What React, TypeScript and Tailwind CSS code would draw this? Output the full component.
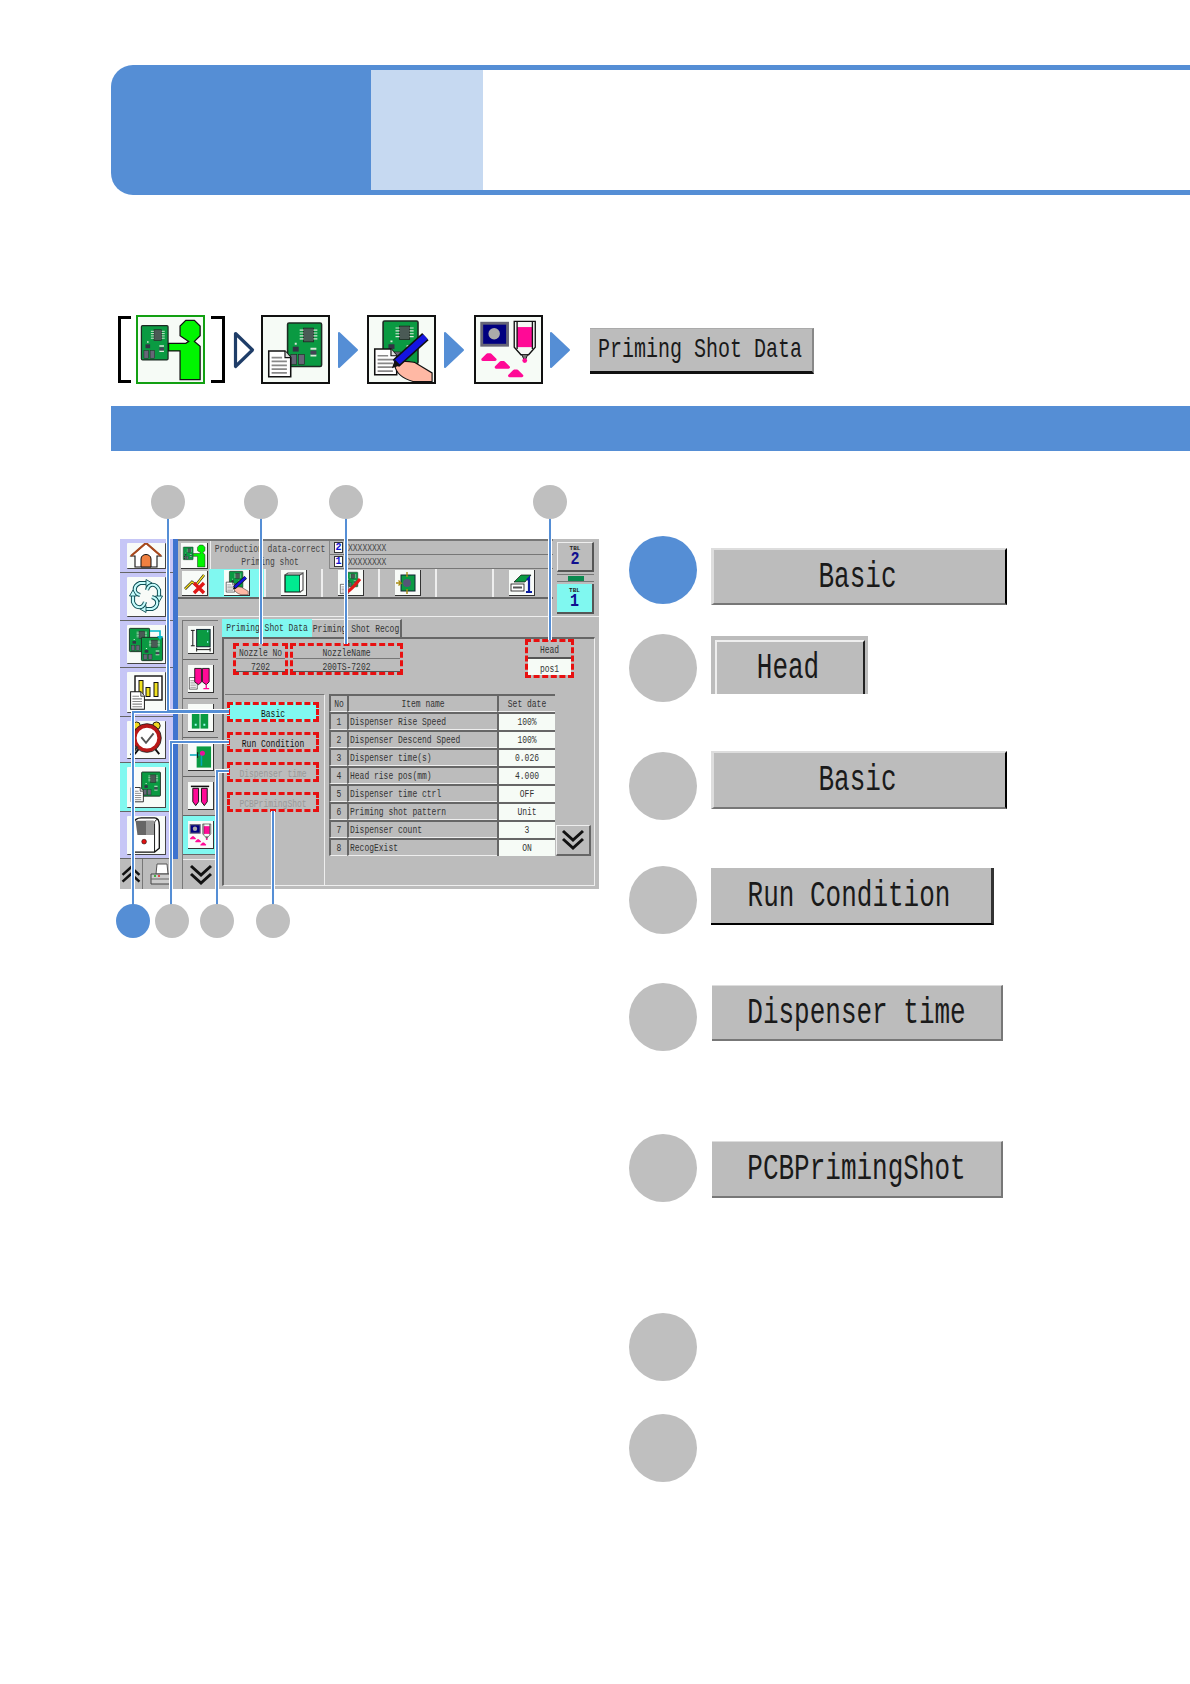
import React from "react";

const T = ({ children }: { children: React.ReactNode }) => (
  <span className="inline-block origin-center scale-y-[1.4] whitespace-pre">{children}</span>
);

const Pcb = ({ x, y, w, h }: { x: number; y: number; w: number; h: number }) => {
  const sx = w / 36;
  const sy = h / 46;
  return (
    <g transform={`translate(${x} ${y}) scale(${sx} ${sy})`}>
      <rect x="0.7" y="0.7" width="34.6" height="44.6" rx="1.5" fill="#0a9a42" stroke="#1c2a22" strokeWidth="1.6" />
      <rect x="17" y="6" width="10" height="14" fill="#4a5a55" stroke="#222" strokeWidth="0.8" />
      <path d="M13 8h4M13 11h4M13 14h4M13 17h4M27 8h4M27 11h4M27 14h4M27 17h4" stroke="#d8e8d8" strokeWidth="1.2" />
      <rect x="6" y="25" width="6" height="5" fill="#334" />
      <path d="M8 22h2M24 27h6M24 34h6" stroke="#d8e8d8" strokeWidth="2" />
      <rect x="24" y="29" width="6" height="4" fill="#445" />
      <rect x="4" y="33" width="6" height="10" fill="#667" stroke="#222" strokeWidth="0.6" />
      <rect x="12" y="33" width="6" height="10" fill="#667" stroke="#222" strokeWidth="0.6" />
    </g>
  );
};

const Doc = ({ x, y, w = 25, h = 29 }: { x: number; y: number; w?: number; h?: number }) => (
  <g transform={`translate(${x} ${y}) scale(${w / 25} ${h / 29})`}>
    <path d="M1 1H18L24 8V28H1Z" fill="#fff" stroke="#111" strokeWidth="1.6" />
    <path d="M18 1V8H24" fill="#ddd" stroke="#111" strokeWidth="1.2" />
    <path d="M4 8H15M4 12H20M4 16H20M4 20H20M4 24H20" stroke="#888" strokeWidth="1.8" />
  </g>
);

const PersonIcon = ({ s = 68 }: { s?: number }) => (
  <svg width={s} height={s} viewBox="0 0 68 68">
    <Pcb x={3} y={8} w={29} h={37} />
    <path
      d="M50 3L59 3L65 9L65 19L59 25L65 30L65 65L44 65L44 35L32 35L32 27L50 27L53 25L44 19L44 9Z"
      fill="#00f500"
      stroke="#111"
      strokeWidth="1.3"
    />
  </svg>
);

const BoardDocIcon = ({ s = 68 }: { s?: number }) => (
  <svg width={s} height={s} viewBox="0 0 68 68">
    <Pcb x={25} y={5} w={37} h={47} />
    <Doc x={5} y={34} />
  </svg>
);

const BoardEditIcon = ({ s = 68 }: { s?: number }) => (
  <svg width={s} height={s} viewBox="0 0 68 68">
    <Pcb x={14} y={3} w={38} h={46} />
    <Doc x={5} y={32} />
    <path d="M27 50C34 44 42 46 48 47L66 58V67H46C36 64 28 58 27 50Z" fill="#ffb8a4" stroke="#111" strokeWidth="1.2" />
    <path d="M28 48L59 20" stroke="#111" strokeWidth="10" />
    <path d="M28 48L59 20" stroke="#1414e0" strokeWidth="7" />
    <path d="M24 53L27 44L33 50Z" fill="#111" />
  </svg>
);

const ShotIcon = ({ s = 68 }: { s?: number }) => (
  <svg width={s} height={s} viewBox="0 0 68 68">
    <rect x="6" y="6" width="27" height="23" fill="#000080" stroke="#667" strokeWidth="3" />
    <circle cx="19" cy="17" r="6" fill="#aaa" />
    <path d="M40 4H62V31L55 39H47L40 31Z" fill="#f4f8f4" stroke="#111" strokeWidth="1.4" />
    <rect x="43" y="10" width="16" height="21" fill="#ff0a96" />
    <path d="M43 4V33M59 4V33" stroke="#111" strokeWidth="1.4" />
    <path d="M48 39L51 46L54 39" fill="#777" stroke="#111" />
    <circle cx="51" cy="45" r="2.5" fill="#ff0a96" />
    <path d="M7 44L12 39H15L20 44Z M21 52L26 47H29L34 52Z M35 61L40 56H43L48 61Z" fill="#ff0a96" stroke="#ff0a96" strokeWidth="3" strokeLinejoin="round" />
  </svg>
);

const HomeIcon = () => (
  <svg width="36" height="28" viewBox="0 0 36 28">
    <path d="M18 2L33 15H29V26H7V15H3Z" fill="#fff" stroke="#111" strokeWidth="1.1" />
    <path d="M3 15L18 2L33 15" fill="none" stroke="#a8481c" strokeWidth="2.2" />
    <path d="M13 26V18C13 12 23 12 23 18V26Z" fill="#f08040" stroke="#111" />
  </svg>
);

const RecycleIcon = () => (
  <svg width="36" height="36" viewBox="0 0 36 36" fill="none">
    {[0, 90, 180, 270].map((r) => (
      <g key={r} transform={`rotate(${r} 18 18)`}>
        <path d="M12 17C5 15 5 8 12 5H19" stroke="#0f4f55" strokeWidth="4.2" />
        <path d="M12 17C5 15 5 8 12 5H19" stroke="#c4fbfb" strokeWidth="2.2" />
        <path d="M18 1.5L24 5L18 8.5Z" fill="#c4fbfb" stroke="#0f4f55" strokeWidth="0.9" />
      </g>
    ))}
  </svg>
);

const BoardCopyIcon = () => (
  <svg width="38" height="38" viewBox="0 0 38 38">
    <Pcb x={2} y={3} w={21} h={24} />
    <Pcb x={14} y={12} w={22} h={24} />
    <path d="M23 6H33V12" fill="none" stroke="#00b8c8" strokeWidth="1.6" />
    <path d="M30 11H36L33 15Z" fill="#00b8c8" />
  </svg>
);

const ChartIcon = () => (
  <svg width="36" height="38" viewBox="0 0 36 38">
    <rect x="7" y="3" width="27" height="24" fill="#fff" stroke="#111" strokeWidth="1.4" />
    <path d="M13 7V24M20 14V24M28 9V24" stroke="#111" strokeWidth="5" />
    <path d="M13 8V23M20 15V23M28 10V23" stroke="#f0e020" strokeWidth="3" />
    <Doc x={2} y={18} w={15} h={19} />
  </svg>
);

const AlarmIcon = () => (
  <svg width="36" height="38" viewBox="0 0 38 40">
    <circle cx="9" cy="6" r="4" fill="#f0d820" stroke="#111" />
    <circle cx="30" cy="6" r="4" fill="#f0d820" stroke="#111" />
    <circle cx="20" cy="19" r="13" fill="#fff" stroke="#b81818" strokeWidth="4" />
    <circle cx="20" cy="19" r="15.2" fill="none" stroke="#111" strokeWidth="0.8" />
    <path d="M14 18L19 24L27 14" fill="none" stroke="#555" strokeWidth="2" />
    <path d="M11 31L7 36M29 31L33 36" stroke="#111" strokeWidth="2" />
    <path d="M3 37L10 28" stroke="#333" strokeWidth="2.5" />
  </svg>
);

const MachineIcon = () => (
  <svg width="34" height="38" viewBox="0 0 34 40">
    <path d="M4 38V8C4 4 8 2 12 2H26C30 2 31 6 31 10V34L26 38Z" fill="#fff" stroke="#111" strokeWidth="1.4" />
    <path d="M26 38V8C26 5 28 3 30 4" fill="none" stroke="#111" />
    <path d="M6 5H25V20H8Z" fill="#666" />
    <path d="M17 5H25V20H17Z" fill="#999" />
    <circle cx="15" cy="27" r="2.5" fill="#e01010" stroke="#111" strokeWidth="0.6" />
  </svg>
);

const SizeIcon = () => (
  <svg width="26" height="26" viewBox="0 0 26 26">
    <rect x="9" y="2" width="14" height="18" fill="#0a9a42" stroke="#123" />
    <path d="M20 4h1M20 15h1" stroke="#9ff" strokeWidth="2" />
    <path d="M5 3V19M3 3H7M3 19H7M9 23H23M9 21V25M23 21V25" stroke="#111" strokeWidth="1" />
  </svg>
);

const SyringeIcon = () => (
  <svg width="26" height="26" viewBox="0 0 26 26">
    <Doc x={1} y={11} w={9} h={13} />
    <path d="M7 2H14V16L11 19L7 16ZM15 2H22V16L19 19L15 16Z" fill="#ff0a96" stroke="#111" strokeWidth="0.9" />
    <path d="M19 19V23M16 23H22" stroke="#ff0a96" strokeWidth="1.4" />
  </svg>
);

const BookIcon = () => (
  <svg width="26" height="26" viewBox="0 0 26 26">
    <rect x="4" y="8" width="8" height="16" fill="#0a9a42" />
    <rect x="13" y="8" width="8" height="16" fill="#0a9a42" />
    <path d="M7 20h2M16 20h2" stroke="#9fe" strokeWidth="2" />
  </svg>
);

const PinIcon = () => (
  <svg width="26" height="26" viewBox="0 0 26 26">
    <rect x="9" y="2" width="15" height="22" fill="#0a9a42" />
    <path d="M2 11H12M14 11V22" stroke="#00a8b8" strokeWidth="1.6" />
    <path d="M10 8V14" stroke="#111" />
    <circle cx="15" cy="9" r="2.6" fill="#e8109a" />
  </svg>
);

const DoubleSyringeIcon = () => (
  <svg width="26" height="26" viewBox="0 0 26 26">
    <path d="M5 5H11V19L8 23L5 19ZM14 5H20V19L17 23L14 19Z" fill="#ff0a96" stroke="#111" />
    <path d="M3 3H22" stroke="#111" strokeWidth="1.6" />
  </svg>
);

const GreenBoxIcon = () => (
  <svg width="24" height="24" viewBox="0 0 24 24">
    <path d="M4 4H19V21H4Z" fill="#00ea90" stroke="#111" strokeWidth="1.2" />
    <path d="M19 4L22 2V19L19 21" fill="#fff" stroke="#555" strokeWidth="1.2" />
    <path d="M4 4L7 2H22" fill="none" stroke="#555" strokeWidth="1.2" />
  </svg>
);

const NoGoIcon = () => (
  <svg width="24" height="24" viewBox="0 0 24 24">
    <path d="M2 18L9 11L13 14L21 4" fill="none" stroke="#111" strokeWidth="2.6" />
    <path d="M2 18L9 11L13 14L21 4" fill="none" stroke="#f4e020" strokeWidth="1.4" />
    <path d="M11 12L21 22M21 12L11 22" stroke="#e01818" strokeWidth="3.4" />
  </svg>
);

const CheckBoardIcon = () => (
  <svg width="24" height="24" viewBox="0 0 24 24">
    <Pcb x={7} y={1} w={13} h={15} />
    <Doc x={2} y={13} w={9} h={10} />
    <path d="M9 21C13 19 18 13 22 8" fill="none" stroke="#e01818" strokeWidth="3" />
  </svg>
);

const TargetBoardIcon = () => (
  <svg width="24" height="24" viewBox="0 0 24 24">
    <rect x="6" y="4" width="14" height="16" fill="#0a9a42" stroke="#123" />
    <circle cx="12" cy="12" r="4" fill="#557" />
    <path d="M1 12H6L3.5 9.5M3.5 14.5L6 12M12 1V6M12 18V23" fill="none" stroke="#a88a10" strokeWidth="1.4" />
  </svg>
);

const TableOneIcon = () => (
  <svg width="24" height="24" viewBox="0 0 24 24">
    <path d="M5 11L12 4H22L16 11Z" fill="#0a9a42" stroke="#111" strokeWidth="0.7" />
    <rect x="2" y="13" width="13" height="7" fill="#fff" stroke="#111" strokeWidth="0.8" />
    <path d="M4 16.5H13" stroke="#555" strokeWidth="2" />
    <path d="M18 9L20 7V21M17 21H23" fill="none" stroke="#0c1ea0" strokeWidth="2.2" />
  </svg>
);

const Chevrons = ({ s = 26, up = false }: { s?: number; up?: boolean }) => (
  <svg width={s} height={s} viewBox="0 0 26 26" fill="none" stroke="#111" strokeWidth="3">
    <g transform={up ? "rotate(180 13 13)" : undefined}>
      <path d="M3 4L13 13L23 4" />
      <path d="M3 12L13 21L23 12" />
    </g>
  </svg>
);

const PrinterIcon = () => (
  <svg width="24" height="24" viewBox="0 0 24 24">
    <path d="M8 2H18L19 12H7Z" fill="#fff" stroke="#555" />
    <path d="M2 12H22V22H2Z" fill="#ccc" stroke="#444" />
    <path d="M2 17H22" stroke="#666" />
    <path d="M5 14h2" stroke="#1a1" strokeWidth="1.4" />
    <path d="M9 14h2" stroke="#d22" strokeWidth="1.4" />
  </svg>
);

const Tri = ({ outline = false }: { outline?: boolean }) => (
  <svg width="22" height="38" viewBox="0 0 22 38" className="shrink-0">
    {outline ? (
      <path d="M2.5 2.5L19.5 19L2.5 35.5Z" fill="#fff" stroke="#1f3d68" strokeWidth="3.2" strokeLinejoin="round" />
    ) : (
      <path d="M2 2L20 19L2 36Z" fill="#558ed5" stroke="#558ed5" strokeWidth="2" strokeLinejoin="round" />
    )}
  </svg>
);

const Bracket = ({ right = false }: { right?: boolean }) => (
  <div
    className={
      right
        ? "h-[67px] w-[14px] shrink-0 border-y-[3px] border-r-[3px] border-black"
        : "h-[67px] w-[13px] shrink-0 border-y-[3px] border-l-[3px] border-black"
    }
  />
);

const IconFrame = ({ children, green = false }: { children: React.ReactNode; green?: boolean }) => (
  <div
    className={
      green
        ? "flex h-[69px] w-[69px] shrink-0 items-center justify-center border-2 border-[#12a012] bg-[#f6fbf6]"
        : "flex h-[69px] w-[69px] shrink-0 items-center justify-center border-2 border-[#111] bg-[#f6fbf6]"
    }
  >
    {children}
  </div>
);

const SideCell = ({ h, active, children }: { h: string; active?: boolean; children: React.ReactNode }) => (
  <div
    className={`flex w-full items-center justify-center border-b border-[#666] ${h} ${active ? "bg-[#80f8f0]" : ""}`}
  >
    <div className="flex h-[calc(100%-7px)] w-[39px] items-center justify-center overflow-hidden rounded-[1px] border-r border-b border-[#444] bg-[#f8fbf8]">
      {children}
    </div>
  </div>
);

const ToolCell = ({ active, children }: { active?: boolean; children: React.ReactNode }) => (
  <div
    className={`flex h-[39px] w-full items-center justify-center border-b border-[#666] ${active ? "bg-[#80f8f0]" : ""}`}
  >
    <div className="flex h-[28px] w-[26px] items-center justify-center border-r border-b border-[#333] bg-[#f8fbf8]">
      {children}
    </div>
  </div>
);

const BarCell = ({ active, children }: { active?: boolean; children?: React.ReactNode }) => (
  <div
    className={`flex h-full w-[57px] items-center justify-center border-r-2 border-[#eee] ${active ? "bg-[#80f8f0]" : ""}`}
  >
    {children ? (
      <div className="flex h-[26px] w-[26px] items-center justify-center border-r border-b border-[#333] bg-[#f8fbf8]">
        {children}
      </div>
    ) : null}
  </div>
);

const rows: [string, string][] = [
  ["Dispenser Rise Speed", "100%"],
  ["Dispenser Descend Speed", "100%"],
  ["Dispenser time(s)", "0.026"],
  ["Head rise pos(mm)", "4.000"],
  ["Dispenser time ctrl", "OFF"],
  ["Priming shot pattern", "Unit"],
  ["Dispenser count", "3"],
  ["RecogExist", "ON"],
];

const headCell = "flex h-[18px] items-center justify-center border-t-2 border-l-2 border-[#666] border-b border-b-[#eee]";
const leftCell = "flex h-[18px] items-center border-t-2 border-l-2 border-[#666] border-b border-b-[#eee] pl-px";
const valueCell = "flex h-[18px] items-center justify-center border-t-2 border-l-2 border-[#666] bg-[#f6fbf6]";
const sideBtn = "flex h-[20px] w-[92px] items-center justify-center border-[3px] border-dashed border-[#e81010] pt-[3px]";

const Lcd = () => (
  <div className="flex h-[350px] w-[479px] bg-[#bcbcbc] text-[8px] leading-none text-[#222]">
    <div className="flex w-[58px] shrink-0 flex-col">
      <div className="flex h-[320px]">
        <div className="flex w-[53px] flex-col bg-[#c6c6f6]">
          <SideCell h="h-[34px]"><HomeIcon /></SideCell>
          <SideCell h="h-[48px]"><RecycleIcon /></SideCell>
          <SideCell h="h-[47px]"><BoardCopyIcon /></SideCell>
          <SideCell h="h-[49px]"><ChartIcon /></SideCell>
          <SideCell h="h-[46px]"><AlarmIcon /></SideCell>
          <SideCell h="h-[49px]" active><BoardDocIcon s={36} /></SideCell>
          <SideCell h="h-[47px]"><MachineIcon /></SideCell>
        </div>
        <div className="w-[5px] bg-[#3f74cf]" />
      </div>
      <div className="flex h-[30px] items-center">
        <div className="flex h-full w-[23px] items-center justify-center border-r border-[#777]">
          <Chevrons s={22} up />
        </div>
        <div className="flex flex-1 items-center justify-center">
          <PrinterIcon />
        </div>
      </div>
    </div>

    <div className="flex flex-1 flex-col">
      <div className="flex h-[78px] border-b border-[#eee]">
        <div className="flex w-[375px] flex-col">
          <div className="flex h-[30px] border-t-2 border-[#777]">
            <div className="ml-[3px] mt-[2px] flex h-[26px] w-[27px] items-center justify-center border-r border-b border-[#333] bg-[#f8fbf8]">
              <PersonIcon s={24} />
            </div>
            <div className="ml-[2px] flex h-[28px] w-[119px] flex-col items-center justify-center gap-[5px] border-l border-[#eee] text-[#444]">
              <T>Production data-correct</T>
              <T>Priming shot</T>
            </div>
            <div className="flex flex-1 flex-col border-l border-[#888]">
              {["2", "1"].map((n) => (
                <div key={n} className="flex h-[14px] items-center border-b border-[#777]">
                  <span className="ml-[4px] flex h-[11px] w-[9px] items-center justify-center border border-[#333] bg-white text-[10px] font-bold text-[#1010d0]">
                    {n}
                  </span>
                  <span className="ml-[5px] text-[#444]"><T>XXXXXXXX</T></span>
                </div>
              ))}
            </div>
          </div>
          <div className="flex h-[30px] items-center border-b-2 border-[#666]">
            <div className="ml-[4px] mr-[1px] flex h-[25px] w-[26px] items-center justify-center border-r border-b border-[#333] bg-[#f8fbf8]">
              <NoGoIcon />
            </div>
            <BarCell active><BoardEditIcon s={25} /></BarCell>
            <BarCell><GreenBoxIcon /></BarCell>
            <BarCell><CheckBoardIcon /></BarCell>
            <BarCell><TargetBoardIcon /></BarCell>
            <BarCell />
            <BarCell><TableOneIcon /></BarCell>
          </div>
        </div>
        <div className="ml-[4px] flex w-[37px] flex-col">
          <div className="mt-[3px] flex h-[30px] flex-col items-center justify-center border-t border-l border-[#eee] border-r-2 border-b-2 border-r-[#555] border-b-[#555]">
            <span className="text-[6px] font-bold">TBL</span>
            <span className="scale-y-[1.2] text-[15px] font-bold text-[#101090]">2</span>
          </div>
          <div className="my-[2px] flex h-[8px] items-center justify-center border-y border-[#777]">
            <span className="h-[5px] w-[16px] bg-[#0a8a50]" />
          </div>
          <div className="flex h-[30px] flex-col items-center justify-center border-r-2 border-b-2 border-[#555] bg-[#80f8f0]">
            <span className="text-[6px] font-bold">TBL</span>
            <span className="scale-y-[1.2] text-[15px] font-bold text-[#101090]">1</span>
          </div>
        </div>
      </div>

      <div className="flex flex-1">
        <div className="ml-[4px] mt-[3px] flex w-[36px] shrink-0 flex-col border-t border-l border-[#777]">
          <ToolCell><SizeIcon /></ToolCell>
          <ToolCell><SyringeIcon /></ToolCell>
          <ToolCell><BookIcon /></ToolCell>
          <ToolCell><PinIcon /></ToolCell>
          <ToolCell><DoubleSyringeIcon /></ToolCell>
          <ToolCell active><ShotIcon s={26} /></ToolCell>
          <div className="mt-[4px] flex flex-1 items-center justify-center border-t border-[#eee]">
            <Chevrons s={26} />
          </div>
        </div>
        <div className="ml-[4px] mt-[2px] flex flex-1 flex-col">
          <div className="flex h-[18px] text-[#333]">
            <div className="flex w-[90px] items-center justify-center bg-[#80f8f0]"><T>Priming Shot Data</T></div>
            <div className="flex w-[90px] items-center justify-center border-r-2 border-t border-[#666] border-t-[#eee]">
              <T>Priming Shot Recog</T>
            </div>
          </div>
          <div className="mr-[4px] mb-[3px] flex flex-1 flex-col border-t-2 border-l-2 border-r border-b border-[#666] border-r-[#eee] border-b-[#eee]">
            <div className="flex h-[55px] items-start">
              <div className="ml-[9px] mt-[4px] flex">
                <div className="h-[32px] w-[55px] border-[3px] border-dashed border-[#e81010] text-center text-[#333]">
                  <div className="flex h-[13px] items-center justify-center border-b border-[#777] pt-px"><T>Nozzle No</T></div>
                  <div className="flex h-[13px] items-center justify-center border-b border-[#555] pt-[4px]"><T>7202</T></div>
                </div>
                <div className="ml-[2px] h-[32px] w-[113px] border-[3px] border-dashed border-[#e81010] text-center text-[#333]">
                  <div className="flex h-[13px] items-center justify-center border-b border-[#777] pt-px"><T>NozzleName</T></div>
                  <div className="flex h-[13px] items-center justify-center border-b border-[#555] pt-[4px]"><T>200TS-7202</T></div>
                </div>
              </div>
              <div className="ml-[122px] h-[39px] w-[49px] border-[3px] border-dashed border-[#e81010] text-[#333]">
                <div className="flex h-[17px] items-center justify-center border-b-2 border-[#555] pt-px"><T>Head</T></div>
                <div className="flex h-[16px] items-center justify-center bg-[#f6fbf6] pt-[3px]"><T>pos1</T></div>
              </div>
            </div>
            <div className="flex flex-1 pl-px">
              <div className="flex w-[100px] flex-col gap-[10px] border-t border-r border-[#eee] border-t-[#777] pl-[2px] pt-[7px]">
                <div className={`${sideBtn} bg-[#80f8f0] text-[#111]`}><T>Basic</T></div>
                <div className={`${sideBtn} text-[#111]`}><T>Run Condition</T></div>
                <div className={`${sideBtn} text-[#999]`}><T>Dispenser time</T></div>
                <div className={`${sideBtn} text-[#999]`}><T>PCBPrimingShot</T></div>
              </div>
              <div className="ml-[4px] flex items-start">
                <div className="grid w-[226px] grid-cols-[18px_150px_58px] text-[#333]">
                  <div className={headCell}><T>No</T></div>
                  <div className={headCell}><T>Item name</T></div>
                  <div className={headCell}><T>Set date</T></div>
                  {rows.map(([name, value], i) => (
                    <React.Fragment key={name}>
                      <div className={headCell}><T>{i + 1}</T></div>
                      <div className={leftCell}><T>{name}</T></div>
                      <div className={valueCell}><T>{value}</T></div>
                    </React.Fragment>
                  ))}
                </div>
                <div className="ml-px mt-[131px] flex h-[31px] w-[35px] items-center justify-center border-t border-l border-[#eee] border-r-2 border-b-2 border-r-[#666] border-b-[#666]">
                  <Chevrons s={26} />
                </div>
              </div>
            </div>
          </div>
        </div>
      </div>
    </div>
  </div>
);

const Leaders = () => {
  const paths = [
    "M168 502V711H229",
    "M261 502V644",
    "M346 502V644",
    "M550 502V640",
    "M133 921V712H229",
    "M171 921V742H229",
    "M217 921V771H229",
    "M273 921V811",
  ];
  const top = [168, 261, 346, 550];
  const bottom = [172, 217, 273];
  return (
    <svg className="pointer-events-none absolute left-0 top-0" width="1190" height="1684" fill="none">
      {paths.map((d) => (
        <path key={`w${d}`} d={d} stroke="#fff" strokeWidth="4" />
      ))}
      {paths.map((d) => (
        <path key={d} d={d} stroke="#558ed5" strokeWidth="2" />
      ))}
      {top.map((x) => (
        <circle key={x} cx={x} cy="502" r="17" fill="#bfbfbf" />
      ))}
      <circle cx="133" cy="921" r="17" fill="#558ed5" />
      {bottom.map((x) => (
        <circle key={x} cx={x} cy="921" r="17" fill="#bfbfbf" />
      ))}
    </svg>
  );
};

const Circle = ({ blue = false }: { blue?: boolean }) => (
  <div className={`h-[68px] w-[68px] shrink-0 rounded-full ${blue ? "bg-[#558ed5]" : "bg-[#bfbfbf]"}`} />
);

const btnBase = "flex items-center justify-center bg-[#bcbcbc] text-[26px] leading-none text-[#1a1a1a]";

export default function App() {
  return (
    <div
      className="relative h-[1684px] w-[1190px] overflow-hidden bg-white"
      style={{ fontFamily: '"Liberation Mono", monospace' }}
    >
      <div className="ml-[111px] box-content flex h-[130px] pt-[65px]">
        <div className="w-[260px] rounded-l-[22px] bg-[#558ed5]" />
        <div className="w-[112px] border-y-[5px] border-[#558ed5] bg-[#c6d9f1]" />
        <div className="flex-1 border-y-[5px] border-[#558ed5] bg-white" />
      </div>

      <div className="mt-[120px] ml-[118px] flex h-[69px] items-center">
        <Bracket />
        <div className="ml-[5px]"><IconFrame green><PersonIcon /></IconFrame></div>
        <div className="ml-[6px]"><Bracket right /></div>
        <div className="ml-[8px]"><Tri outline /></div>
        <div className="ml-[6px]"><IconFrame><BoardDocIcon /></IconFrame></div>
        <div className="ml-[7px]"><Tri /></div>
        <div className="ml-[8px]"><IconFrame><BoardEditIcon /></IconFrame></div>
        <div className="ml-[7px]"><Tri /></div>
        <div className="ml-[9px]"><IconFrame><ShotIcon /></IconFrame></div>
        <div className="ml-[6px]"><Tri /></div>
        <div className="ml-[19px] mt-[3px] flex h-[46px] w-[224px] items-center justify-center border-t border-[#aaa] border-r-2 border-r-[#888] border-b-[3px] border-b-[#111] bg-[#bcbcbc] pr-[2px] text-[20px] leading-none text-[#1a1a1a]">
          <T>Priming Shot Data</T>
        </div>
      </div>

      <div className="mt-[22px] ml-[111px] h-[45px] bg-[#558ed5]" />

      <div className="flex">
        <div className="w-[629px] shrink-0 pl-[120px] pt-[88px]">
          <Lcd />
        </div>
        <div className="pt-[85px]">
          <div className="flex gap-[14px]">
            <Circle blue />
            <div className={`${btnBase} mt-[12px] h-[57px] w-[296px] border-t-2 border-l-[3px] border-r-2 border-b-2 border-t-[#ddd] border-l-[#ddd] border-r-black border-b-[#777] pr-[4px] text-[25.5px]`}>
              <T>Basic</T>
            </div>
          </div>
          <div className="mt-[29px] flex gap-[14px]">
            <Circle />
            <div className="mt-[2px] h-[58px] w-[157px] border-t-4 border-l-4 border-[#bcbcbc] bg-[#bcbcbc]">
              <div className={`${btnBase} h-full w-[150px] border-t-2 border-l-2 border-r-2 border-t-[#eee] border-l-[#eee] border-r-[#222] pr-[4px] text-[24px]`}>
                <T>Head</T>
              </div>
            </div>
          </div>
          <div className="mt-[50px] flex gap-[14px]">
            <Circle />
            <div className={`${btnBase} -mt-px h-[58px] w-[296px] border-t-2 border-l-[3px] border-r-2 border-b-2 border-t-[#ddd] border-l-[#ddd] border-r-black border-b-[#777] pr-[4px] text-[25.5px]`}>
              <T>Basic</T>
            </div>
          </div>
          <div className="mt-[46px] flex gap-[14px]">
            <Circle />
            <div className={`${btnBase} mt-[2px] h-[57px] w-[283px] border-r-[3px] border-b-[2px] border-r-[#333] border-b-black pr-[4px] text-[25.5px]`}>
              <T>Run Condition</T>
            </div>
          </div>
          <div className="mt-[49px] flex gap-[14px]">
            <Circle />
            <div className={`${btnBase} ml-px mt-[2px] h-[56px] w-[291px] border-t border-r-2 border-b-2 border-t-[#ddd] border-r-[#777] border-b-[#777]`}>
              <T>Dispenser time</T>
            </div>
          </div>
          <div className="mt-[83px] flex gap-[14px]">
            <Circle />
            <div className={`${btnBase} ml-px mt-[7px] h-[57px] w-[291px] border-t border-r-2 border-b-2 border-t-[#ddd] border-r-[#777] border-b-[#777]`}>
              <T>PCBPrimingShot</T>
            </div>
          </div>
          <div className="mt-[111px]"><Circle /></div>
          <div className="mt-[33px]"><Circle /></div>
        </div>
      </div>

      <Leaders />
    </div>
  );
}
